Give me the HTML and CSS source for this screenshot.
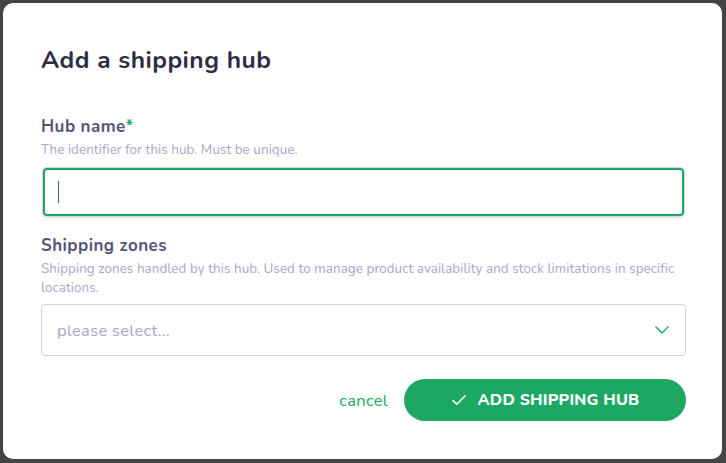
FILE: index.html
```html
<!DOCTYPE html>
<html lang="en">
<head>
<meta charset="utf-8">
<title>Add a shipping hub</title>
<link rel="stylesheet" href="styles.css">
</head>
<body>
<div class="backdrop">
  <div class="modal">
    <h1 class="title">Add a shipping hub</h1>
    <div class="field">
      <label class="label">Hub name<span class="req">*</span></label>
      <p class="hint">The identifier for this hub. Must be unique.</p>
      <div class="input focused"><span class="caret"></span></div>
    </div>
    <div class="field">
      <label class="label">Shipping zones</label>
      <p class="hint">Shipping zones handled by this hub. Used to manage product availability and stock limitations in specific locations.</p>
      <div class="select">
        <span class="placeholder">please select...</span>
        <svg class="chevron" width="16" height="10" viewBox="0 0 16 10"><path d="M1.5 1.5 L8 8 L14.5 1.5" fill="none" stroke="#1ca862" stroke-width="1.4"/></svg>
      </div>
    </div>
    <div class="actions">
      <a class="cancel">cancel</a>
      <button class="primary">
        <svg width="16" height="12" viewBox="0 0 16 12"><path d="M1.5 6.2 L5.8 10.2 L14.5 1.5" fill="none" stroke="#fff" stroke-width="1.6"/></svg>
        <span>ADD SHIPPING HUB</span>
      </button>
    </div>
  </div>
</div>
</body>
</html>
```
FILE: styles.css
```css
html, body {
  margin: 0;
  padding: 0;
  background: #444444;
  font-family: "Nunito", "Lato", "Noto Sans", sans-serif;
}
.backdrop {
  width: 726px;
  height: 463px;
  padding: 3px 4px 4px 3px;
  box-sizing: border-box;
}
.modal {
  background: #ffffff;
  border-radius: 10px;
  height: 100%;
  box-sizing: border-box;
  padding: 42px 36px 0 38px;
}
.title {
  margin: 0;
  font-size: 24.5px;
  letter-spacing: 0.5px;
  line-height: 30px;
  font-weight: 700;
  color: #2e2c45;
}
.field {
  margin-top: 42px;
}
.field + .field {
  margin-top: 20px;
}
.label {
  display: block;
  font-size: 17px;
  letter-spacing: 0.45px;
  line-height: 20px;
  font-weight: 700;
  color: #585474;
}
.req {
  color: #1ca862;
}
.hint {
  margin: 3px 0 0;
  font-size: 13.4px;
  letter-spacing: 0.08px;
  line-height: 19px;
  color: #aaa7c4;
}
.input {
  margin-top: 9px;
  height: 48px;
  box-sizing: border-box;
  border: 2px solid #1ca862;
  border-radius: 4px;
  box-shadow: 0 0 0 1px #d5d3e3, 0 2px 4px rgba(0, 0, 0, 0.12);
  margin-left: 2px;
  margin-right: 2px;
  display: flex;
  align-items: center;
  padding-left: 13px;
}
.caret {
  width: 1px;
  height: 22px;
  background: #3a6a52;
}
.select {
  margin-top: 7px;
  height: 52px;
  box-sizing: border-box;
  border: 1px solid #d2d0e2;
  border-radius: 4px;
  display: flex;
  align-items: center;
  justify-content: space-between;
  padding: 0 15px 0 15px;
}
.placeholder {
  font-size: 16.5px;
  letter-spacing: 0.3px;
  color: #aaa7c4;
}
.chevron {
  display: block;
}
.actions {
  margin-top: 23px;
  display: flex;
  justify-content: flex-end;
  align-items: center;
  gap: 16px;
}
.cancel {
  font-size: 16.5px;
  letter-spacing: 0.3px;
  color: #1ca862;
  cursor: pointer;
}
.primary {
  width: 282px;
  height: 42px;
  border: none;
  border-radius: 21px;
  background: #1ca862;
  color: #ffffff;
  font-family: inherit;
  font-size: 16px;
  letter-spacing: 0.2px;
  font-weight: 800;
  display: flex;
  align-items: center;
  justify-content: center;
  gap: 11px;
  padding: 0;
  cursor: pointer;
}
.primary svg {
  display: block;
}
```
